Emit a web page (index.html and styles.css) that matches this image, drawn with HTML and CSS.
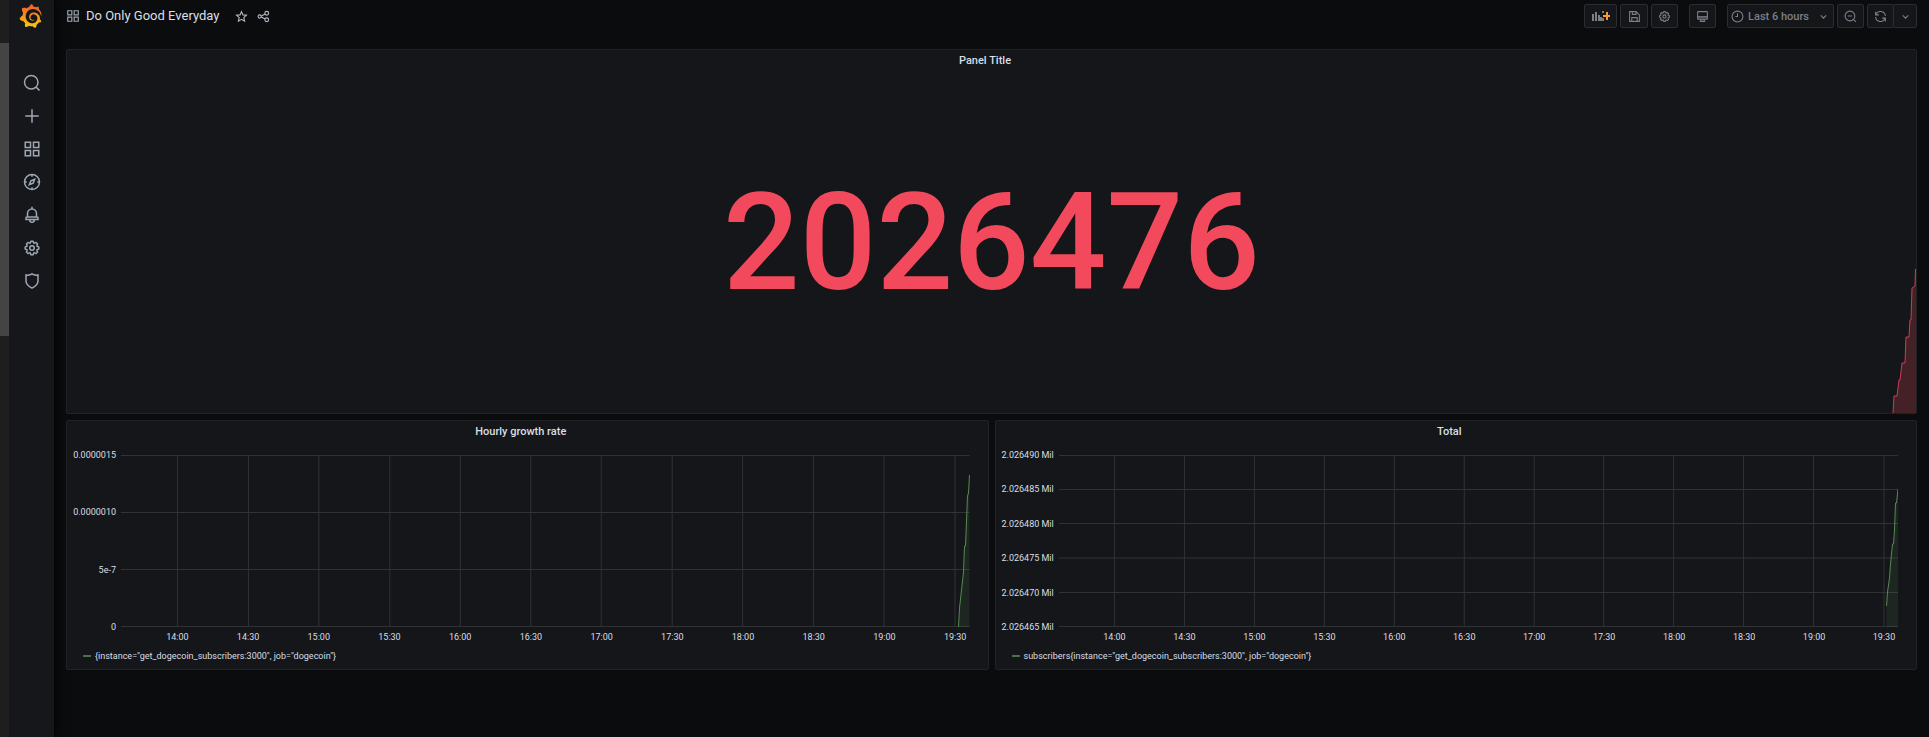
FILE: index.html
```html
<!DOCTYPE html>
<html lang="en">
<head>
<meta charset="utf-8">
<title>Do Only Good Everyday</title>
<link rel="stylesheet" href="styles.css">
</head>
<body>
<svg class="defs" aria-hidden="true">
  <symbol id="apps" viewBox="0 0 24 24"><path d="M3 3h7v7H3zM14 3h7v7h-7zM3 14h7v7H3zM14 14h7v7h-7z"/></symbol>
  <symbol id="cog" viewBox="0 0 24 24"><path class="solid" d="M21.32,9.55l-1.89-.63.89-1.78A1,1,0,0,0,20.13,6L18,3.87a1,1,0,0,0-1.15-.19l-1.78.89-.63-1.89A1,1,0,0,0,13.5,2h-3a1,1,0,0,0-.95.68L8.92,4.57,7.14,3.68A1,1,0,0,0,6,3.87L3.87,6a1,1,0,0,0-.19,1.15l.89,1.78-1.89.63A1,1,0,0,0,2,10.5v3a1,1,0,0,0,.68.95l1.89.63-.89,1.78A1,1,0,0,0,3.87,18L6,20.13a1,1,0,0,0,1.15.19l1.78-.89.63,1.89a1,1,0,0,0,.95.68h3a1,1,0,0,0,.95-.68l.63-1.89,1.78.89A1,1,0,0,0,18,20.13L20.13,18a1,1,0,0,0,.19-1.15l-.89-1.78,1.89-.63A1,1,0,0,0,22,13.5v-3A1,1,0,0,0,21.32,9.55ZM20,12.78l-1.2.4A2,2,0,0,0,17.64,16l.57,1.14-1.1,1.1L16,17.64a2,2,0,0,0-2.79,1.16l-.4,1.2H11.22l-.4-1.2A2,2,0,0,0,8,17.64l-1.14.57-1.1-1.1L6.36,16A2,2,0,0,0,5.2,13.18L4,12.78V11.22l1.2-.4A2,2,0,0,0,6.36,8L5.79,6.89l1.1-1.1L8,6.36A2,2,0,0,0,10.82,5.2l.4-1.2h1.56l.4,1.2A2,2,0,0,0,16,6.36l1.14-.57,1.1,1.1L17.64,8a2,2,0,0,0,1.16,2.79l1.2.4ZM12,8a4,4,0,1,0,4,4A4,4,0,0,0,12,8Zm0,6a2,2,0,1,1,2-2A2,2,0,0,1,12,14Z"/></symbol>
  <symbol id="chevron" viewBox="0 0 24 24"><path d="M7 10l5 5 5-5"/></symbol>
</svg>
<div class="app">
  <div class="gutter"><div class="gutter-thumb"></div></div>
  <nav class="sidebar" aria-label="Main">
    <a class="logo" href="#" aria-label="Home">
      <svg viewBox="0 0 351 365"><defs><linearGradient id="flame" x1="0" y1="1" x2="0" y2="0"><stop offset="0" stop-color="#fdcb0a"/><stop offset="1" stop-color="#f05a28"/></linearGradient></defs><path fill="url(#flame)" d="M342,161.2c-0.6-6.1-1.6-13.1-3.6-20.9c-2-7.7-5-16.2-9.4-25c-4.4-8.8-10.1-17.9-17.5-26.8c-2.9-3.5-6.1-6.9-9.5-10.2c5.1-20.3-6.2-37.9-6.2-37.9c-19.5-1.2-31.9,6.1-36.5,9.4c-0.8-0.3-1.5-0.7-2.3-1c-3.3-1.3-6.7-2.6-10.3-3.7c-3.5-1.1-7.1-2.1-10.8-3c-3.7-0.9-7.4-1.6-11.2-2.2c-0.7-0.1-1.3-0.2-2-0.3c-8.5-27.2-32.9-38.6-32.9-38.6c-27.3,17.3-32.4,41.5-32.4,41.5s-0.1,0.5-0.3,1.4c-1.5,0.4-3,0.9-4.5,1.3c-2.1,0.6-4.2,1.4-6.2,2.2c-2.1,0.8-4.1,1.6-6.2,2.5c-4.1,1.8-8.2,3.8-12.2,6c-3.9,2.2-7.7,4.6-11.4,7.1c-0.5-0.2-1-0.4-1-0.4c-37.8-14.4-71.3,2.9-71.3,2.9c-3.1,40.2,15.1,65.5,18.7,70.1c-0.9,2.5-1.7,5-2.5,7.5c-2.8,9.1-4.9,18.4-6.2,28.1c-0.2,1.4-0.4,2.8-0.5,4.2C18.8,192.7,8.5,228,8.5,228c29.1,33.5,63.1,35.6,63.1,35.6c0,0,0.1-0.1,0.1-0.1c4.3,7.7,9.3,15,14.9,21.9c2.4,2.9,4.8,5.6,7.4,8.3c-10.6,30.4,1.5,55.6,1.5,55.6c32.4,1.2,53.7-14.2,58.2-17.7c3.2,1.1,6.5,2.1,9.8,2.9c10,2.6,20.2,4.1,30.4,4.5c2.5,0.1,5.1,0.2,7.6,0.1l1.2,0l0.8,0l1.6,0l1.6-0.1l0,0.1c15.3,21.8,42.1,24.9,42.1,24.9c19.1-20.1,20.2-40.1,20.2-44.4l0,0c0,0,0-0.1,0-0.3c0-0.4,0-0.6,0-0.6l0,0c0-0.3,0-0.6,0-0.9c4-2.8,7.8-5.8,11.4-9.1c7.6-6.9,14.3-14.8,19.9-23.3c0.5-0.8,1-1.6,1.5-2.4c21.6,1.2,36.9-13.4,36.9-13.4c-3.6-22.5-16.4-33.5-19.1-35.6l0,0c0,0-0.1-0.1-0.3-0.2c-0.2-0.1-0.2-0.2-0.2-0.2c0,0,0,0,0,0c-0.1-0.1-0.3-0.2-0.5-0.3c0.1-1.4,0.2-2.7,0.3-4.1c0.2-2.4,0.2-4.9,0.2-7.3l0-1.8l0-0.9l0-0.5c0-0.6,0-0.4,0-0.6l-0.1-1.5l-0.1-2c0-0.7-0.1-1.3-0.2-1.9c-0.1-0.6-0.1-1.3-0.2-1.9l-0.2-1.9l-0.3-1.9c-0.4-2.5-0.8-4.9-1.4-7.4c-2.3-9.7-6.1-18.9-11-27.2c-5-8.3-11.2-15.6-18.3-21.8c-7-6.2-14.9-11.2-23.1-14.9c-8.3-3.7-16.9-6.1-25.5-7.2c-4.3-0.6-8.6-0.8-12.9-0.7l-1.6,0l-0.4,0c-0.1,0-0.6,0-0.5,0l-0.7,0l-1.6,0.1c-0.6,0-1.2,0.1-1.7,0.1c-2.2,0.2-4.4,0.5-6.5,0.9c-8.6,1.6-16.7,4.7-23.8,9c-7.1,4.3-13.3,9.6-18.3,15.6c-5,6-8.9,12.7-11.6,19.6c-2.7,6.9-4.2,14.1-4.6,21c-0.1,1.7-0.1,3.5-0.1,5.2c0,0.4,0,0.9,0,1.3l0.1,1.4c0.1,0.8,0.1,1.7,0.2,2.5c0.3,3.5,1,6.9,1.9,10.1c1.9,6.5,4.9,12.4,8.6,17.4c3.7,5,8.2,9.1,12.9,12.4c4.7,3.2,9.8,5.5,14.8,7c5,1.5,10,2.1,14.7,2.1c0.6,0,1.2,0,1.7,0c0.3,0,0.6,0,0.9,0c0.3,0,0.6,0,0.9-0.1c0.5,0,1-0.1,1.5-0.1c0.1,0,0.3,0,0.4-0.1l0.5-0.1c0.3,0,0.6-0.1,0.9-0.1c0.6-0.1,1.1-0.2,1.7-0.3c0.6-0.1,1.1-0.2,1.6-0.4c1.1-0.2,2.1-0.6,3.1-0.9c2-0.7,4-1.5,5.7-2.4c1.8-0.9,3.4-2,5-3c0.4-0.3,0.9-0.6,1.3-1c1.6-1.3,1.9-3.7,0.6-5.3c-1.1-1.4-3.1-1.8-4.7-0.9c-0.4,0.2-0.8,0.4-1.2,0.6c-1.4,0.7-2.8,1.3-4.3,1.8c-1.5,0.5-3.1,0.9-4.7,1.2c-0.8,0.1-1.6,0.2-2.5,0.3c-0.4,0-0.8,0.1-1.3,0.1c-0.4,0-0.9,0-1.2,0c-0.4,0-0.8,0-1.2,0c-0.5,0-1,0-1.5-0.1l-0.6,0c-0.2,0-0.5,0-0.7-0.1c-0.5-0.1-0.9-0.1-1.4-0.2c-3.7-0.5-7.4-1.6-10.9-3.2c-3.6-1.6-7-3.8-10.1-6.6c-3.1-2.8-5.8-6.1-7.9-9.9c-2.1-3.8-3.6-8-4.3-12.4c-0.3-2.2-0.5-4.5-0.4-6.7c0-0.6,0.1-1.2,0.1-1.8l0-0.8c0-0.3,0.1-0.6,0.1-0.9c0.1-1.2,0.3-2.4,0.5-3.6c1.7-9.6,6.5-19,13.9-26.1c1.9-1.8,3.9-3.4,6-4.9c2.1-1.5,4.4-2.8,6.8-3.9c2.4-1.1,4.8-2,7.4-2.7c2.5-0.7,5.1-1.1,7.8-1.4c1.3-0.1,2.6-0.2,4-0.2l2.7,0l1.5,0.1c2.9,0.2,5.7,0.6,8.5,1.3c5.6,1.2,11.1,3.3,16.2,6.1c10.2,5.7,18.9,14.5,24.2,25.1c2.7,5.3,4.6,11,5.5,16.9c0.2,1.5,0.4,3,0.5,4.5l0.2,2.2l0,4.3c0,0.7-0.1,1.9-0.1,2.6c-0.1,1.6-0.3,3.3-0.5,4.9c-0.2,1.6-0.5,3.2-0.8,4.8c-0.3,1.6-0.7,3.2-1.1,4.7c-0.8,3.1-1.8,6.2-3,9.3c-2.4,6-5.6,11.8-9.4,17.1c-7.7,10.6-18.2,19.2-30.2,24.7c-6,2.7-12.3,4.7-18.8,5.7c-3.2,0.6-6.5,0.9-9.8,1l-5,0c-1.8,0-3.5-0.1-5.3-0.3c-7-0.5-13.9-1.8-20.7-3.7c-6.7-1.9-13.2-4.6-19.4-7.8c-12.3-6.6-23.4-15.6-32-26.5c-4.3-5.4-8.1-11.3-11.2-17.4c-3.1-6.1-5.6-12.6-7.4-19.1c-1.8-6.6-2.9-13.3-3.4-20.1l-0.1-1.3l0-6.3c0-0.8,0-1.7,0-2.5c0.1-3.3,0.4-6.8,0.8-10.2c0.4-3.4,1-6.9,1.7-10.3c0.7-3.4,1.5-6.8,2.5-10.2c1.9-6.7,4.3-13.2,7.1-19.3c5.7-12.2,13.1-23.1,22-31.8c2.2-2.2,4.5-4.2,6.9-6.2c2.4-1.9,4.9-3.7,7.5-5.4c2.5-1.7,5.2-3.2,7.9-4.6c2.8-1.4,5.5-2.6,8.3-3.8c2.8-1.2,5.7-2.2,8.7-3.1c1.5-0.4,2.9-0.9,4.4-1.3c4.5-1.2,9-2.1,13.7-2.9c5.8-0.8,11.7-1.3,17.5-1.5c2.9-0.1,5.9-0.1,8.8,0c5.8,0.2,11.5,0.9,17,1.9c11.1,2.1,21.5,5.6,31,10.3c9.5,4.6,17.9,10.3,25.3,16.5c3.5,3.1,6.9,6.2,10.2,9.7c3.1,3.3,6,6.6,8.6,10c5.2,6.7,9.4,13.5,12.7,19.9c1.6,3.1,3.1,6.3,4.4,9.4c1.2,3,2.4,5.9,3.3,8.6c1.5,4.4,2.6,8.3,3.5,11.7c0.3,1.4,1.6,2.3,3,2.1c1.5-0.1,2.6-1.3,2.6-2.8C342.6,170.4,342.5,166.1,342,161.2z"/></svg>
    </a>
    <a class="nav-item" href="#" aria-label="Search"><svg class="icon" viewBox="0 0 24 24"><circle cx="11" cy="11" r="9"/><path d="M17.5 17.5L22 22"/></svg></a>
    <a class="nav-item" href="#" aria-label="Create"><svg class="icon" viewBox="0 0 24 24"><path d="M12 3v18M3 12h18"/></svg></a>
    <a class="nav-item" href="#" aria-label="Dashboards"><svg class="icon"><use href="#apps"/></svg></a>
    <a class="nav-item" href="#" aria-label="Explore"><svg class="icon" viewBox="0 0 24 24"><circle cx="12" cy="12" r="10"/><path d="M15.500 8.500l-2 5-5 2 2-5zM12 2v3M12 19v3M2 12h3M19 12h3"/></svg></a>
    <a class="nav-item" href="#" aria-label="Alerting"><svg class="icon" viewBox="0 0 24 24"><path d="M12 1v3M6 14v-4a6 6 0 0 1 12 0v4M5 14.500h14a1 1 0 0 1 1 1V18H4v-2.500a1 1 0 0 1 1-1zM9 18.500a3 3 0 0 0 6 0"/></svg></a>
    <a class="nav-item" href="#" aria-label="Configuration"><svg class="icon"><use href="#cog"/></svg></a>
    <a class="nav-item" href="#" aria-label="Server admin"><svg class="icon" viewBox="0 0 24 24"><path d="M4 4c3 .5 6 0 8-1.500C14 4 17 4.500 20 4v8c0 4-4 7.500-8 9.500-4-2-8-5.500-8-9.500z"/></svg></a>
  </nav>
  <div class="page">
    <header class="toolbar">
      <svg class="icon title-icon"><use href="#apps"/></svg>
      <h1 class="title"><a href="#">Do Only Good Everyday</a></h1>
      <button class="plain star" aria-label="Mark as favorite"><svg class="icon small" viewBox="0 0 24 24"><path d="M12 3l2.700 6 6.300.7-4.700 4.300 1.400 6.500L12 17.200 6.300 20.500 7.700 14 3 9.700 9.300 9z"/></svg></button>
      <button class="plain" aria-label="Share dashboard"><svg class="icon small" viewBox="0 0 24 24"><circle cx="5" cy="12" r="3"/><circle cx="18" cy="6" r="3.500"/><circle cx="18" cy="18" r="3.500"/><path d="M8 11l7-3.500M8 13l7 3.500"/></svg></button>
      <div class="actions">
        <button class="btn add" aria-label="Add panel"><svg class="add-icon" viewBox="0 0 18 10"><path class="bars" d="M0 3h2v7H0zM3 1h2v9H3zM6 4h2v6H6zM8 6h2v4H8zM10 0h2v2h-2zM10 7h2v3h-2z"/><path class="plus" d="M14 1h2v3h2v2h-2v3h-2V6h-3V4h3z"/></svg></button>
        <button class="btn save" aria-label="Save dashboard"><svg class="icon small" viewBox="0 0 24 24"><path d="M3 3h12l6 6v12H3zM8 3v5h7V4M7 21v-7h10v7"/></svg></button>
        <button class="btn" aria-label="Dashboard settings"><svg class="icon small"><use href="#cog"/></svg></button>
        <button class="btn spaced" aria-label="Cycle view mode"><svg class="icon small" viewBox="0 0 24 24"><path class="shade" d="M3 12h18v4H3z"/><path d="M4 3h16a1 1 0 0 1 1 1v12a1 1 0 0 1-1 1H4a1 1 0 0 1-1-1V4a1 1 0 0 1 1-1zM3 12.500h18M9 17v4M15 17v4M7 21h10"/></svg></button>
        <button class="btn range spaced"><svg class="icon small" viewBox="0 0 24 24"><circle cx="12" cy="12" r="10"/><path d="M12 6v6H8"/></svg><span>Last 6 hours</span><svg class="icon small caret"><use href="#chevron"/></svg></button>
        <button class="btn" aria-label="Zoom out"><svg class="icon small" viewBox="0 0 24 24"><circle cx="11" cy="11" r="9"/><path d="M17.500 17.500L22 22M7 11h8"/></svg></button>
        <div class="split">
          <button class="btn" aria-label="Refresh"><svg class="icon small" viewBox="0 0 24 24"><path d="M3 3v6h6M3.500 9A9 9 0 0 1 21 11M21 21v-6h-6M20.500 15A9 9 0 0 1 3 13"/></svg></button>
          <button class="btn drop" aria-label="Refresh interval"><svg class="icon small"><use href="#chevron"/></svg></button>
        </div>
      </div>
    </header>
    <main class="board">
      <section class="panel stat">
        <h2>Panel Title</h2>
        <div class="value">2026476</div>
        <svg class="spark" viewBox="0 0 25 144"><path class="area" d="M2 144L3 127h3L8 111h1L11 94h3L15 68h3L19 51h1L21 19l3-2L24 0h1v144z"/><path class="line" d="M2 144L3 127h3L8 111h1L11 94h3L15 68h3L19 51h1L21 19l3-2L24.500 0"/></svg>
      </section>
      <section class="panel graph">
        <h2>Hourly growth rate</h2>
        <div class="chart">
          <div class="y-axis"><span>0.0000015</span><span>0.0000010</span><span>5e-7</span><span>0</span></div>
          <svg class="plot" viewBox="0 0 849 172" preserveAspectRatio="none">
            <path class="grid" d="M0 .5H849M0 57.500H849M0 114.500H849M0 171.500H849M56.500 0V172M127.500 0V172M198 0V172M269 0V172M339.500 0V172M410 0V172M480.500 0V172M551.500 0V172M622 0V172M693 0V172M763.500 0V172M834.500 0V172"/>
            <path class="area" d="M838 172L839 153 841 135 843 117 844 91h1L847 41l1-3L849 20v152z"/>
            <path class="line" d="M838 172L839 153 841 135 843 117 844 91h1L847 41l1-3L849 20"/>
          </svg>
          <div class="x-axis"><span>14:00</span><span>14:30</span><span>15:00</span><span>15:30</span><span>16:00</span><span>16:30</span><span>17:00</span><span>17:30</span><span>18:00</span><span>18:30</span><span>19:00</span><span>19:30</span></div>
        </div>
        <a class="legend" href="#">{instance="get_dogecoin_subscribers:3000", job="dogecoin"}</a>
      </section>
      <section class="panel graph total">
        <h2>Total</h2>
        <div class="chart">
          <div class="y-axis"><span>2.026490 Mil</span><span>2.026485 Mil</span><span>2.026480 Mil</span><span>2.026475 Mil</span><span>2.026470 Mil</span><span>2.026465 Mil</span></div>
          <svg class="plot" viewBox="0 0 840 172" preserveAspectRatio="none">
            <path class="grid" d="M0 .5H840M0 34.500H840M0 68.500H840M0 103H840M0 137.500H840M0 171.500H840M55.500 0V172M125.500 0V172M195.500 0V172M265.500 0V172M335.500 0V172M405.500 0V172M475.500 0V172M545 0V172M615 0V172M685 0V172M755 0V172M825.500 0V172"/>
            <path class="area" d="M828 151L829 137 831 123 832 109 834 89h1L836 75 837 48h1L839.500 34V172H828z"/>
            <path class="line" d="M828 151L829 137 831 123 832 109 834 89h1L836 75 837 48h1L839.500 34"/>
          </svg>
          <div class="x-axis"><span>14:00</span><span>14:30</span><span>15:00</span><span>15:30</span><span>16:00</span><span>16:30</span><span>17:00</span><span>17:30</span><span>18:00</span><span>18:30</span><span>19:00</span><span>19:30</span></div>
        </div>
        <a class="legend" href="#">subscribers{instance="get_dogecoin_subscribers:3000", job="dogecoin"}</a>
      </section>
    </main>
  </div>
</div>
</body>
</html>
```

FILE: styles.css
```css
* { box-sizing: border-box; }
body {
  margin: 0;
  background: #0b0c0e;
  color: #d8dfe6;
  font-family: Roboto, "Liberation Sans", sans-serif;
  font-size: 9px;
}
a { color: inherit; text-decoration: none; }
button { font: inherit; cursor: pointer; }
.defs { display: none; }
.app { display: flex; min-height: 100vh; }

.gutter { position: relative; z-index: 1; width: 9px; padding-top: 43px; background: #1e1e1e; }
.gutter-thumb { height: 293px; background: #444; }

.sidebar {
  display: flex;
  flex-direction: column;
  width: 45px;
  background: #16171b;
  box-shadow: 0 0 15px #000;
}
.logo { height: 66px; padding: 4px 10px; }
.logo svg { display: block; width: 23px; height: 24px; }
.nav-item {
  display: flex;
  align-items: center;
  justify-content: center;
  height: 33px;
  color: #9fa7b3;
}

.icon {
  display: block;
  flex: none;
  width: 18px;
  height: 18px;
  fill: none;
  stroke: currentColor;
  stroke-width: 2;
}
.solid { fill: currentColor; stroke: none; }
.small { width: 13px; height: 13px; }

.page { flex: 1; min-width: 0; padding: 0 12px; }
.toolbar { display: flex; align-items: center; height: 32px; margin-bottom: 17px; }
.title-icon { width: 14px; height: 14px; color: #9fa7b3; }
.title { margin: 0 16px 0 6px; font-size: 13px; font-weight: 400; line-height: 20px; }
.plain { padding: 0; border: 0; background: none; color: #b4bcc6; }
.star { margin-right: 9px; }
.actions { display: flex; gap: 3px; margin-left: auto; }
.btn {
  display: flex;
  align-items: center;
  justify-content: center;
  width: 27px;
  height: 24px;
  padding: 0;
  border: 1px solid #2c2d31;
  border-radius: 2px;
  background: #141619;
  color: #7b8087;
}
.add { width: 33px; }
.save { width: 28px; }
.add-icon { flex: none; width: 18px; height: 10px; }
.bars { fill: #7b7e83; }
.plus { fill: #ff9830; }
.shade { fill: #4a4d52; stroke: none; }
.spaced { margin-left: 8px; }
.range { width: 107px; gap: 4px; font-size: 11px; font-weight: 500; }
.caret { margin-left: 4px; }
.split { display: flex; }
.drop { width: 24px; margin-left: -1px; }

.board { display: grid; grid-template-columns: 1fr 1fr; gap: 6px; }
.panel {
  position: relative;
  border: 1px solid #202226;
  border-radius: 2px;
  background: #141619;
}
.panel h2 {
  margin: 0;
  padding-right: 13px;
  font-size: 11px;
  font-weight: 500;
  line-height: 21px;
  text-align: center;
}
.stat { grid-column: 1 / -1; }
.value {
  padding: 93px 0 90px;
  color: #f2495c;
  font-size: 135px;
  font-weight: 500;
  line-height: 159px;
  text-align: center;
}
.spark { position: absolute; right: 0; bottom: 0; width: 25px; height: 144px; }
.stat .area { fill: #f2495c; fill-opacity: .22; }
.stat .line { fill: none; stroke: #c93f50; }

.chart {
  display: grid;
  grid-template-columns: 43px 1fr;
  column-gap: 5px;
  padding: 13px 18px 0 6px;
}
.total .chart { grid-template-columns: 52px 1fr; }
.y-axis {
  display: flex;
  flex-direction: column;
  justify-content: space-between;
  margin: -5px 0;
  line-height: 10px;
  text-align: right;
  white-space: nowrap;
}
.plot { display: block; width: 100%; height: 172px; }
.plot path { vector-effect: non-scaling-stroke; }
.grid { fill: none; stroke: #303235; }
.graph .area { fill: #73bf69; fill-opacity: .1; }
.graph .line { fill: none; stroke: #568a50; }
.x-axis {
  grid-column: 2;
  display: grid;
  grid-template-columns: repeat(12, 1fr);
  margin: 5px -21px 0 21px;
  line-height: 10px;
  text-align: center;
}
.legend {
  display: flex;
  align-items: center;
  gap: 4px;
  margin: 8px 16px 7px;
  line-height: 12px;
}
.legend::before { content: ""; width: 8px; height: 2px; background: #4c7347; }
```
